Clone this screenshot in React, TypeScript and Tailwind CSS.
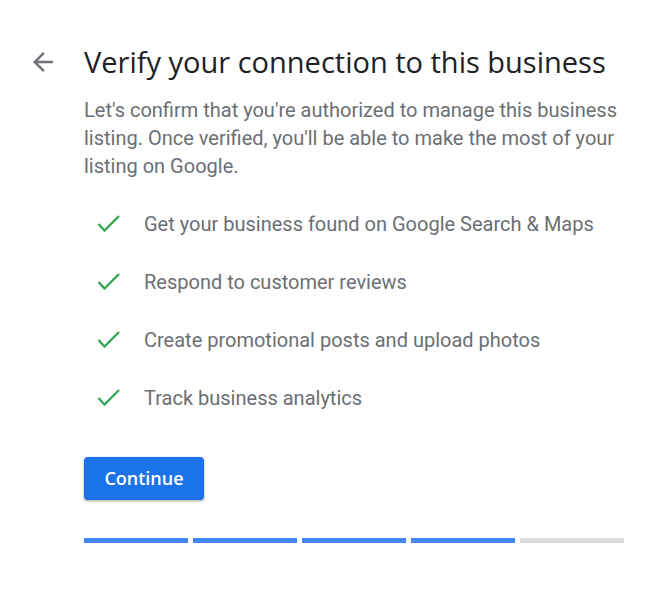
import React from "react";

const items = [
  "Get your business found on Google Search & Maps",
  "Respond to customer reviews",
  "Create promotional posts and upload photos",
  "Track business analytics",
];

const steps = [true, true, true, true, false];

const Check = () => (
  <svg width="24" height="20" viewBox="0 0 24 20" fill="none">
    <polyline points="1.5,10 7.5,16.5 22,2" stroke="#34a853" strokeWidth="2.4" />
  </svg>
);

const App = () => {
  return (
    <div className="min-h-[605px] w-[672px] bg-white pt-[44px] font-['Roboto',sans-serif]">
      <div className="flex">
        <div className="flex w-[84px] justify-start pl-[28px] pt-[3px]">
          <svg width="30" height="30" viewBox="0 0 24 24" fill="#6f7276">
            <path d="M20 11H7.83l5.59-5.59L12 4l-8 8 8 8 1.41-1.41L7.83 13H20v-2z" />
          </svg>
        </div>
        <div className="flex w-[540px] flex-col">
          <h1 className="whitespace-nowrap font-['Open_Sans',sans-serif] text-[29px] leading-[36px] text-[#202124]">
            Verify your connection to this business
          </h1>
          <p className="mt-[16px] text-[20px] leading-[28px] text-[#6b6f74]">
            Let's confirm that you're authorized to manage this business listing. Once verified,
            you'll be able to make the most of your listing on Google.
          </p>
          <ul className="mt-[30px] flex flex-col gap-[30px]">
            {items.map((t) => (
              <li key={t} className="flex items-center text-[20px] leading-[28px] text-[#6b6f74]">
                <span className="flex w-[60px] pl-[13px]">
                  <Check />
                </span>
                {t}
              </li>
            ))}
          </ul>
          <div className="mt-[45px]">
            <button className="h-[43px] w-[120px] rounded-[4px] bg-[#1a73e8] font-['Open_Sans',sans-serif] text-[18px] font-semibold text-white shadow-[0_1px_2px_rgba(60,64,67,0.3),0_1px_3px_1px_rgba(60,64,67,0.15)]">
              Continue
            </button>
          </div>
          <div className="mt-[38px] flex gap-[5px]">
            {steps.map((done, i) => (
              <div key={i} className={done ? "h-[5px] w-[104px] bg-[#4285f4]" : "h-[5px] w-[104px] bg-[#dadce0]"} />
            ))}
          </div>
        </div>
      </div>
    </div>
  );
};

export default App;
